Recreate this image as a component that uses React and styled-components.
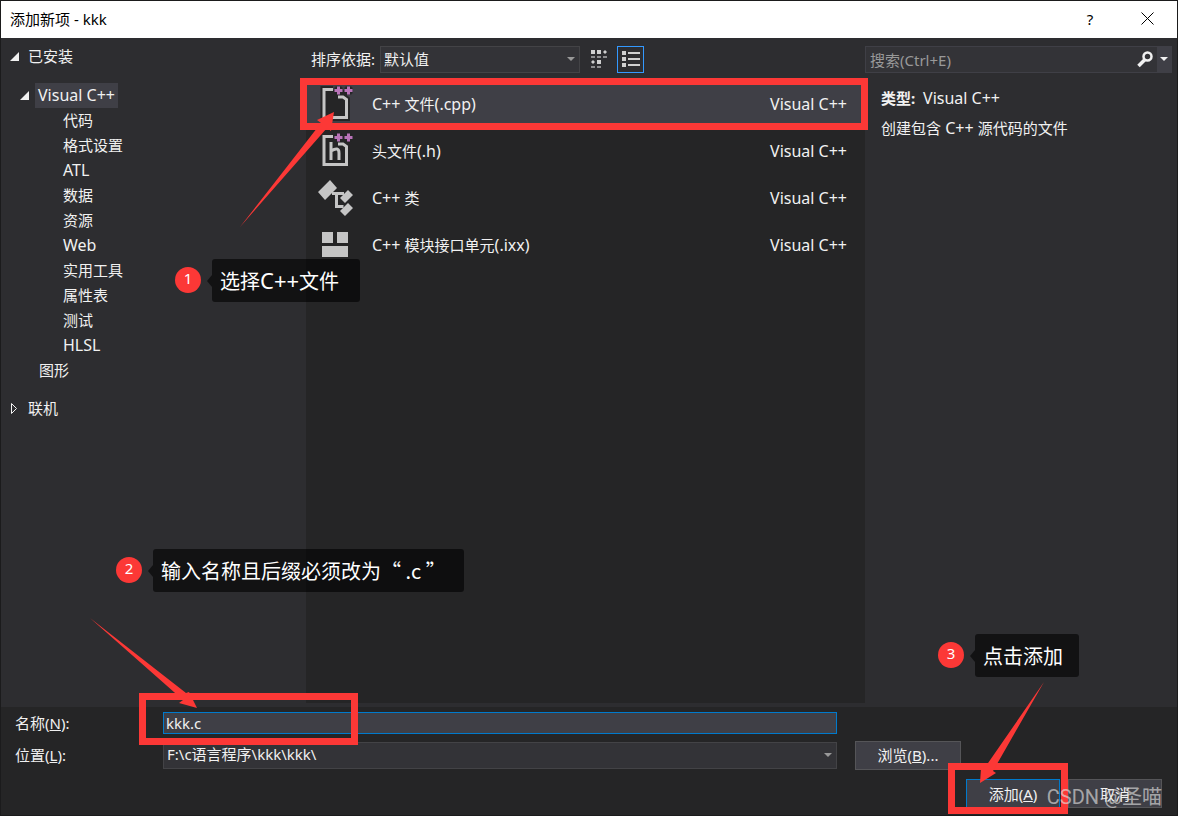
import React from "react";
import styled, { createGlobalStyle } from "styled-components";

const GlobalStyle = createGlobalStyle`
  * { box-sizing: border-box; }
  body {
    margin: 0;
    background: #252526;
    color: #f1f1f1;
    font: 15px/20px "Noto Sans", "Noto Sans CJK SC", sans-serif;
  }
  button, input, select { font: inherit; color: inherit; margin: 0; }
  ul { list-style: none; margin: 0; padding: 0; }
`;

const Dialog = styled.div`
  position: relative;
  display: flex;
  flex-direction: column;
  min-height: 100vh;
  border: 1px solid #1b1b1c;
  background: #2d2d30;
  overflow: hidden;
`;

const TitleBar = styled.header`
  display: flex;
  align-items: center;
  height: 37px;
  padding: 0 22px 2px 9px;
  background: #fff;
  color: #000;
`;

const Title = styled.h1`
  flex: 1;
  margin: 0;
  font-size: 15px;
  font-weight: 400;
`;

const TitleButton = styled.button`
  display: flex;
  justify-content: center;
  width: 16px;
  margin-left: 41px;
  padding: 0;
  border: 0;
  background: none;
`;

const Main = styled.main`
  flex: 1;
  display: grid;
  grid-template-columns: 305px minmax(0, 1fr) 312px;
`;

const Side = styled.nav`
  padding: 6px 0 0 8px;
`;

const Node = styled.div`
  display: flex;
  align-items: center;
  height: 25px;
  margin-top: ${(p) => p.$gap || 0}px;
  padding-left: ${(p) => p.$indent || 0}px;
`;

const Twisty = styled.svg`
  width: 11px;
  height: 11px;
  margin-right: 5px;
`;

const NodeLabel = styled.span`
  padding: 2px 3px 3px;
  background: ${(p) => (p.$selected ? "#3f3f46" : "none")};
`;

const Latin = styled.span`
  font-size: ${(p) => (p.$large ? 22 : 16)}px;
  line-height: 1;
`;

const Center = styled.section`
  display: flex;
  flex-direction: column;
  padding-bottom: 4px;
`;

const Toolbar = styled.div`
  display: flex;
  align-items: center;
  height: 40px;
  padding: 3px 0 0 5px;
`;

const SortLabel = styled.label`
  width: 69px;
  padding-bottom: 2px;
  white-space: nowrap;
`;

const SelectBox = styled.div`
  position: relative;
  display: flex;
  flex: ${(p) => (p.$fixed ? "0 0 200px" : "1")};
`;

const Select = styled.select`
  appearance: none;
  width: 100%;
  height: 27px;
  padding: 0 24px 2px 3px;
  border: 1px solid #434346;
  border-radius: 0;
  background: #333337;
`;

const SelectArrow = styled.svg`
  position: absolute;
  right: 5px;
  top: 11px;
  width: 8px;
  height: 5px;
  fill: #999;
  pointer-events: none;
`;

const ViewButton = styled.button`
  display: flex;
  align-items: center;
  justify-content: center;
  width: 27px;
  height: 27px;
  margin-left: 5px;
  padding: 0 0 2px 0;
  border: 1px solid ${(p) => (p.$active ? "#3399ff" : "transparent")};
  background: none;
`;

const List = styled.ul`
  flex: 1;
  background: #252526;
`;

const Item = styled.li`
  display: flex;
  align-items: center;
  height: 47px;
  margin-left: 1px;
  padding: 4px 18px 0 9px;
  background: ${(p) => (p.$selected ? "#3f3f46" : "none")};
`;

const ItemIcon = styled.svg`
  width: 40px;
  height: 40px;
  margin-right: 16px;
`;

const ItemName = styled.span`
  flex: 1;
`;

const Details = styled.aside`
  padding: 8px 5px 0 0;
`;

const SearchBox = styled.form`
  display: flex;
  height: 27px;
  border: 1px solid #3f3f46;
  background: #333337;
`;

const SearchInput = styled.input`
  flex: 1;
  min-width: 0;
  padding: 0 4px;
  border: 0;
  background: none;
  &::placeholder { color: #999; opacity: 1; }
`;

const SearchButton = styled.button`
  display: flex;
  align-items: center;
  justify-content: center;
  width: ${(p) => (p.$menu ? 14 : 24)}px;
  padding: 0;
  border: 0;
  background: ${(p) => (p.$menu ? "#3f3f46" : "none")};
`;

const Info = styled.p`
  margin: 0;
  padding: ${(p) => (p.$first ? 15 : 10)}px 0 0 16px;
`;

const Footer = styled.footer`
  background: #252526;
  padding: 5px 15px 7px 14px;
`;

const FieldRow = styled.div`
  display: grid;
  grid-template-columns: 148px minmax(0, 1fr) 325px;
  align-items: center;
  height: ${(p) => p.$height}px;
`;

const NameInput = styled.input`
  width: 100%;
  height: 22px;
  padding: 0 2px;
  border: 1px solid #007acc;
  background: #3f3f46;
  outline: 0;
`;

const Button = styled.button`
  width: ${(p) => p.$width}px;
  height: 29px;
  padding: 0;
  border: 1px solid ${(p) => (p.$primary ? "#007acc" : "#555558")};
  background: #3f3f46;
`;

const BrowseCell = styled.div`
  padding-left: 18px;
`;

const Actions = styled.div`
  display: flex;
  justify-content: flex-end;
  gap: 8px;
  padding-top: 3px;
`;

const Frame = styled.div`
  position: absolute;
  left: ${(p) => p.$x}px;
  top: ${(p) => p.$y}px;
  width: ${(p) => p.$w}px;
  height: ${(p) => p.$h}px;
  border: 7px solid #fc3836;
  pointer-events: none;
`;

const Arrows = styled.svg`
  position: absolute;
  left: 0;
  top: 0;
  width: 1176px;
  height: 814px;
  fill: #fc3836;
  pointer-events: none;
`;

const Callout = styled.div`
  position: absolute;
  left: ${(p) => p.$x}px;
  top: ${(p) => p.$y}px;
  display: flex;
  align-items: center;
`;

const Badge = styled.span`
  width: 26px;
  height: 26px;
  margin-bottom: 1px;
  border-radius: 13px;
  background: #fc3836;
  color: #fff;
  line-height: 23px;
  text-align: center;
`;

const Pointer = styled.svg`
  width: 5px;
  height: 12px;
  margin-left: 6px;
  fill: rgba(0, 0, 0, 0.6);
`;

const Bubble = styled.span`
  width: ${(p) => p.$w}px;
  height: 43px;
  padding-left: 8px;
  border-radius: 3px;
  background: rgba(0, 0, 0, 0.6);
  color: #fff;
  font: 20px/43px "Noto Sans CJK SC", sans-serif;
  white-space: pre;
  ${Latin} { font-family: "Noto Sans", sans-serif; }
`;

const Watermark = styled.span`
  position: absolute;
  right: 15px;
  bottom: 6px;
  color: rgba(225, 225, 225, 0.65);
  font: 20px/24px Roboto, "Noto Sans CJK SC", sans-serif;
  pointer-events: none;
`;

const Expanded = () => (
  <Twisty viewBox="0 0 11 11"><path d="M10 1v9H1z" fill="#f1f1f1" /></Twisty>
);
const Collapsed = () => (
  <Twisty viewBox="0 0 11 11"><path d="M2.500 .5v10l5-5z" fill="none" stroke="#f1f1f1" /></Twisty>
);

const pageLine = "M17 5.500H8V33.500H30.500V15.500L27 13H22";
const plusLine = "M22.500 2.500v8M18.500 6.500h8M32.500 2.500v8M28.500 6.500h8";
const Page = () => (
  <g fill="none">
    <path d={pageLine} stroke="#252526" strokeWidth="7" />
    <path d={plusLine} stroke="#252526" strokeWidth="6" />
    <path d={pageLine} stroke="#c5c5c5" strokeWidth="3" />
    <path d={plusLine} stroke="#b873b8" strokeWidth="3" />
  </g>
);

const icons = {
  cpp: (
    <>
      <path d="M8 6h23v28H8z" fill="#252526" />
      <Page />
    </>
  ),
  header: (
    <>
      <Page />
      <path d="M15 11v18M15 20q8-5 8 2v7" fill="none" stroke="#c5c5c5" strokeWidth="3" />
    </>
  ),
  cls: (
    <g fill="#c5c5c5">
      <path d="M14 2l7 8-12 12-7-8zM32 12l5 5-8 8-5-5zM32 25l5 5-8 8-5-5z" />
      <path d="M16 15.500h12M20.500 15.500v13h7" fill="none" stroke="#c5c5c5" strokeWidth="3" />
    </g>
  ),
  module: <path d="M6 7h11v11H6zM21 7h11v11H21zM6 21h26v11H6z" fill="#c5c5c5" />,
};

const items = [
  ["cpp", <><Latin>C++ </Latin>文件<Latin>(.cpp)</Latin></>],
  ["header", <>头文件<Latin>(.h)</Latin></>],
  ["cls", <><Latin>C++ </Latin>类</>],
  ["module", <><Latin>C++ </Latin>模块接口单元<Latin>(.ixx)</Latin></>],
];

const categories = [
  "代码", "格式设置", <Latin>ATL</Latin>, "数据", "资源", <Latin>Web</Latin>,
  "实用工具", "属性表", "测试", <Latin>HLSL</Latin>,
];

function Step({ n, x, y, w, children }) {
  return (
    <Callout $x={x} $y={y}>
      <Badge>{n}</Badge>
      <Pointer viewBox="0 0 5 12"><path d="M5 0v12L0 6z" /></Pointer>
      <Bubble $w={w}>{children}</Bubble>
    </Callout>
  );
}

export default function App() {
  return (
    <Dialog>
      <GlobalStyle />
      <TitleBar>
        <Title>添加新项 - kkk</Title>
        <TitleButton aria-label="帮助">?</TitleButton>
        <TitleButton aria-label="关闭">
          <svg width="13" height="13" viewBox="0 0 13 13"><path d="M.5.5l12 12M12.5.5l-12 12" stroke="#000" fill="none" /></svg>
        </TitleButton>
      </TitleBar>

      <Main>
        <Side>
          <Node><Expanded /><NodeLabel>已安装</NodeLabel></Node>
          <Node $gap={14} $indent={10}><Expanded /><NodeLabel $selected><Latin>Visual C++</Latin></NodeLabel></Node>
          {categories.map((c, i) => <Node key={i} $indent={51}><NodeLabel>{c}</NodeLabel></Node>)}
          <Node $indent={27}><NodeLabel>图形</NodeLabel></Node>
          <Node $gap={13}><Collapsed /><NodeLabel>联机</NodeLabel></Node>
        </Side>

        <Center>
          <Toolbar>
            <SortLabel htmlFor="sort">排序依据:</SortLabel>
            <SelectBox $fixed>
              <Select id="sort"><option>默认值</option></Select>
              <SelectArrow viewBox="0 0 8 5"><path d="M0 0h8L4 4z" /></SelectArrow>
            </SelectBox>
            <ViewButton aria-label="中等图标">
              <svg width="18" height="20" viewBox="0 0 18 20" fill="#d0d0d0">
                <path d="M1 1h4v4H1zM7 1h4v4H7zM15 1l2 2-2 2-2-2zM3 11l2 2-2 2-2-2zM7 11h4v4H7z" />
                <path d="M1 7h4v2H1zM7 7h4v2H7zM13 7h4v2h-4zM1 17h4v2H1zM7 17h4v2H7z" fill="#8e8e90" />
              </svg>
            </ViewButton>
            <ViewButton $active aria-label="小图标">
              <svg width="18" height="18" viewBox="0 0 18 18" fill="#d0d0d0">
                <path d="M0 1h4v4H0zM0 7h4v4H0zM0 13h4v4H0zM6 2h12v2H6zM6 8h12v2H6zM6 14h12v2H6z" />
              </svg>
            </ViewButton>
          </Toolbar>
          <List>
            {items.map(([icon, name], i) => (
              <Item key={icon} $selected={i === 0}>
                <ItemIcon viewBox="0 0 40 40">{icons[icon]}</ItemIcon>
                <ItemName>{name}</ItemName>
                <Latin>Visual C++</Latin>
              </Item>
            ))}
          </List>
        </Center>

        <Details>
          <SearchBox>
            <SearchInput aria-label="搜索" placeholder="搜索(Ctrl+E)" />
            <SearchButton type="button" aria-label="搜索">
              <svg width="16" height="17" viewBox="0 0 16 17" fill="none" stroke="#f1f1f1">
                <circle cx="10.500" cy="5.500" r="4" strokeWidth="2.500" /><path d="M7.500 9L1.500 15" strokeWidth="3.500" />
              </svg>
            </SearchButton>
            <SearchButton type="button" $menu aria-label="搜索选项">
              <svg width="8" height="5" viewBox="0 0 8 5"><path d="M0 0h8L4 4z" fill="#f1f1f1" /></svg>
            </SearchButton>
          </SearchBox>
          <Info $first><b>类型:</b>&nbsp; <Latin>Visual C++</Latin></Info>
          <Info>创建包含<Latin> C++ </Latin>源代码的文件</Info>
        </Details>
      </Main>

      <Footer>
        <FieldRow $height={22}>
          <label htmlFor="name">名称(<u>N</u>):</label>
          <NameInput id="name" defaultValue="kkk.c" />
        </FieldRow>
        <FieldRow $height={42}>
          <label htmlFor="location">位置(<u>L</u>):</label>
          <SelectBox>
            <Select id="location"><option>F:\c语言程序\kkk\kkk\</option></Select>
            <SelectArrow viewBox="0 0 8 5"><path d="M0 0h8L4 4z" /></SelectArrow>
          </SelectBox>
          <BrowseCell><Button $width={106}>浏览(<u>B</u>)...</Button></BrowseCell>
        </FieldRow>
        <Actions>
          <Button $width={94} $primary>添加(<u>A</u>)</Button>
          <Button $width={94}>取消</Button>
        </Actions>
      </Footer>

      <Frame $x={299} $y={77} $w={568} $h={52} />
      <Frame $x={138} $y={692} $w={219} $h={52} />
      <Frame $x={947} $y={762} $w={120} $h={51} />
      <Arrows viewBox="1 1 1176 814">
        <path d="M240 227L321 123 317 120 334 112 331 131 327 128Z" />
        <path d="M90 618L186 693 189 692 197 708 179 703 183 700Z" />
        <path d="M1044 682L993 771 996 773 980 783 981 768 986 766Z" />
      </Arrows>
      <Step n={1} x={174} y={258} w={148}>选择<Latin $large>C++</Latin>文件</Step>
      <Step n={2} x={115} y={548} w={311}>输入名称且后缀必须改为“ .c ”</Step>
      <Step n={3} x={937} y={633} w={104}>点击添加</Step>
      <Watermark>CSDN @圣喵</Watermark>
    </Dialog>
  );
}
